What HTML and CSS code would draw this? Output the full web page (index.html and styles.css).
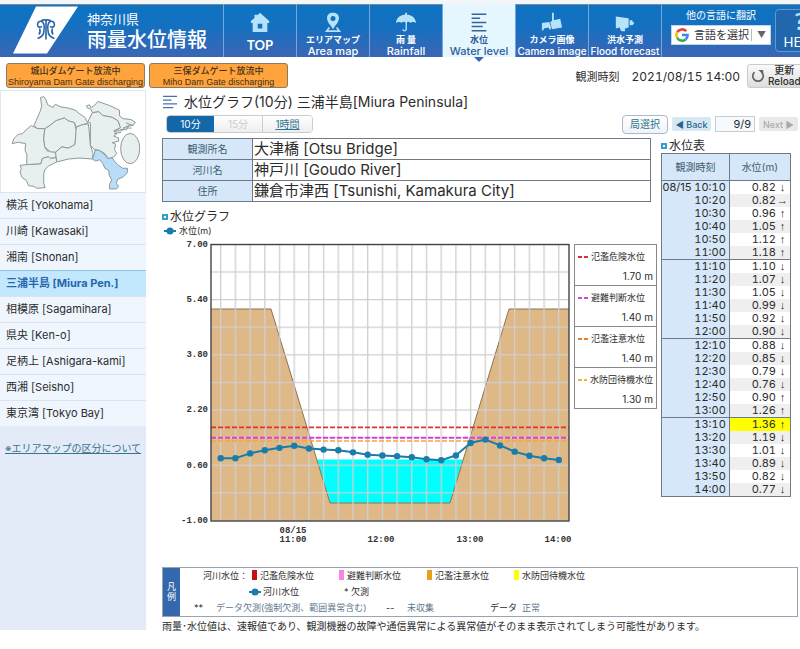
FILE: index.html
```html
<!DOCTYPE html>
<html lang="ja">
<head>
<meta charset="utf-8">
<meta name="viewport" content="width=device-width, initial-scale=1">
<title>神奈川県 雨量水位情報</title>
<link rel="stylesheet" href="styles.css">
</head>
<body>
<header class="header">
  <a class="brand" href="#">
    <svg class="brand-mark" viewBox="0 0 78 52" aria-hidden="true">
      <path d="M36 2H78L47 49H13Z" fill="#fff"/>
      <path d="M42 22Q38 24 37.500 20Q38 16 42 17Q45 19 44 26Q44 32 37.500 34M50 22Q54 24 54.500 20Q54 16 50 17Q47 19 48 26Q48 32 54.500 34M41 17Q42 15 46 15.500Q50 15 51 17M46 16V35M39.500 24Q41 27 39 30M52.500 24Q51 27 53 30" fill="none" stroke="#2b62a8" stroke-width="1.600"/>
    </svg>
    <span class="brand-text"><span class="pref">神奈川県</span><span class="site">雨量水位情報</span></span>
  </a>
  <nav class="nav">
    <a href="#"><svg viewBox="0 0 24 24"><path d="M12 2L22 11V13H20V23H4V13H2V11L6 7.500V4H9V5ZM9.500 14V19H14.500V14Z" fill-rule="evenodd"/></svg><span class="top">TOP</span></a>
    <a href="#"><svg viewBox="0 0 24 24"><path d="M12 2C7 2 5.500 5 5.500 8C5.500 12 9 15 12 20C15 15 18.500 12 18.500 8C18.500 5 17 2 12 2ZM12 5.500A2.700 2.700 0 1 1 12 11A2.700 2.700 0 1 1 12 5.500Z" fill-rule="evenodd"/><path d="M8 18L5 22H19L16 18" fill="none" stroke="#b5e4fa" stroke-width="1.800"/></svg><b>エリアマップ</b><span>Area map</span></a>
    <a href="#"><svg viewBox="0 0 24 24"><path d="M1 13C2 6 7 4 11 4V2H13V4C17 4 22 6 23 13C21 11.500 18 11.500 17 13C15.500 11.500 14 11.500 13 12.500V20C13 23 8 23 8 20H9.500C9.500 21.500 11.500 21.500 11.500 20V12.500C10 11.500 8.500 11.500 7 13C6 11.500 3 11.500 1 13Z"/></svg><b>雨 量</b><span>Rainfall</span></a>
    <a class="current" href="#" aria-current="page"><svg viewBox="0 0 24 24"><path d="M4 3.500H20M4 8H13M4 12.500H20M4 17H16M4 21.500H20" stroke="#38639c" stroke-width="1.600"/></svg><b>水位</b><span>Water level</span></a>
    <a href="#"><svg viewBox="0 0 24 24"><path d="M12 2H14V10L21 8.500L23 18L12 20L10 12L12 11ZM1 13L9 12L11 18L10 21L8 18L3 19V21H1Z"/></svg><b>カメラ画像</b><span class="small">Camera image</span></a>
    <a href="#"><svg viewBox="0 0 24 24"><path d="M2 6L16 8V18L12 19V22H8L6 18L2 19ZM17 10H20V11.500Q24 13 20 15.500H17Z"/></svg><b>洪水予測</b><span class="small">Flood forecast</span></a>
  </nav>
  <div class="translate">
    <label for="lang">他の言語に翻訳</label>
    <div class="lang-box">
      <svg viewBox="0 0 20 20" aria-hidden="true" fill="none" stroke-width="3.200"><path d="M15.300 5.300A7 7 0 0 0 4 6.500" stroke="#e94335"/><path d="M4 6.500A7 7 0 0 0 4 13.500" stroke="#fbbc05"/><path d="M4 13.500A7 7 0 0 0 14.500 15.500" stroke="#34a853"/><path d="M14.500 15.500Q17 13.500 17 10H10" stroke="#4285f4"/></svg>
      <select id="lang"><option>言語を選択</option></select>
      <span class="caret">▼</span>
    </div>
  </div>
  <button class="help" type="button"><b>?</b><span>HELP</span></button>
</header>

<div class="status">
  <a class="alert" href="#"><span>城山ダムゲート放流中</span><span class="en">Shiroyama Dam Gate discharging</span></a>
  <a class="alert" href="#"><span>三保ダムゲート放流中</span><span class="en">Miho Dam Gate discharging</span></a>
  <p class="observed"><span>観測時刻</span><time>2021/08/15 14:00</time></p>
  <button class="reload" type="button"><svg viewBox="0 0 16 16"><path d="M4 3.500A6 6 0 1 0 12 3.500" fill="none" stroke="#666" stroke-width="2"/><path d="M8.500 1H14V6.500Z" fill="#666"/></svg><span>更新<br>Reload</span></button>
</div>

<div class="page">
  <aside class="sidebar">
    <svg class="map" viewBox="0 0 438 306" role="img" aria-label="エリアマップ">
      <g fill="#e7efef" stroke="#8d9699" stroke-width="3" stroke-linejoin="round">
        <path d="M120 20L130 17L136 24L142 42L158 50L165 40L180 48L205 52L225 58L240 70L255 80L264 98L246 103L229 110L223 96L205 91L193 82L168 90L150 104L133 115L110 114L100 105L107 90L120 60L124 45Z"/>
        <path d="M92 105L110 114L133 115L130 145L133 170L140 182L166 186L168 203L150 205L144 200L126 205L121 222L78 224L79 195L73 180L75 160L52 156L34 160L39 145L52 132L65 130L79 116Z"/>
        <path d="M133 115L150 104L168 90L193 82L205 91L223 96L229 120L225 163L205 174L185 170L166 186L150 185L133 170L130 145Z"/>
        <path d="M229 110L246 103L266 100L268 120L272 165L280 190L278 207L240 204L205 207L169 216L166 186L185 170L205 174L225 163Z"/>
        <path d="M58 226L78 224L121 222L126 205L144 200L150 205L168 203L169 216L145 228L134 238L130 252L130 280L134 294L109 296L100 290L84 288L77 272L64 263L58 247L62 236Z"/>
        <path d="M260 45L269 42L274 51L285 43L295 32L330 44L360 58L361 76L371 84L396 87L409 96L399 105L380 108L368 121L348 122L363 112L356 91L338 80L308 74L298 63L278 66L274 56L262 51Z"/>
        <path d="M278 66L298 63L308 74L338 80L356 91L363 112L343 121L353 130L343 137L358 143L357 153L338 157L349 162L345 178L352 190L342 201L328 206L315 190L300 181L284 178L272 165L272 97L264 94Z"/>
        <path d="M363 117L382 118L389 103M371 112L397 113M365 126L344 129M380 97L403 105" fill="none"/>
        <ellipse cx="393" cy="175" rx="29" ry="46"/>
        <path d="M278 207L285 189L286 179L300 181L314 192L325 206L338 203L345 213L355 224L370 235L385 235L384 249L372 261L355 269L351 281L358 290L351 298L330 298L330 284L337 270L329 256L328 242L316 235L310 221L300 209L288 213Z" fill="#b8ddf9"/>
      </g>
    </svg>
    <ul class="areas">
      <li><a href="#">横浜 [Yokohama]</a></li>
      <li><a href="#">川崎 [Kawasaki]</a></li>
      <li><a href="#">湘南 [Shonan]</a></li>
      <li><a class="selected" href="#">三浦半島 [Miura Pen.]</a></li>
      <li><a href="#">相模原 [Sagamihara]</a></li>
      <li><a href="#">県央 [Ken-o]</a></li>
      <li><a href="#">足柄上 [Ashigara-kami]</a></li>
      <li><a href="#">西湘 [Seisho]</a></li>
      <li><a href="#">東京湾 [Tokyo Bay]</a></li>
    </ul>
    <a class="area-note" href="#">※エリアマップの区分について</a>
  </aside>

  <main class="main">
    <h1><svg viewBox="0 0 16 14" aria-hidden="true"><path d="M0 1H15M0 5H9M0 9H15M0 13H11" stroke="#4a70a8" stroke-width="1.500"/></svg>水位グラフ(10分) 三浦半島[Miura Peninsula]</h1>
    <div class="toolbar">
      <div class="tabs"><button class="on" type="button">10分</button><button type="button" disabled>15分</button><button class="link" type="button">1時間</button></div>
      <button class="choose" type="button">局選択</button>
      <button class="pager" type="button">◀ Back</button>
      <input class="page-no" type="text" value="9/9" aria-label="ページ">
      <button class="pager" type="button" disabled>Next ▶</button>
    </div>

    <div class="columns">
      <div class="left">
        <table class="station">
          <tr><th scope="row">観測所名</th><td>大津橋 [Otsu Bridge]</td></tr>
          <tr><th scope="row">河川名</th><td>神戸川 [Goudo River]</td></tr>
          <tr><th scope="row">住所</th><td>鎌倉市津西 [Tsunishi, Kamakura City]</td></tr>
        </table>
        <h2>水位グラフ</h2>
        <p class="series"><svg class="dot" viewBox="0 0 12 8"><path d="M0 4H12" stroke="#1a7cab" stroke-width="2"/><circle cx="6" cy="4" r="3.500" fill="#1a7cab"/></svg>水位(m)</p>
        <div class="chart-row">
          <svg class="chart" viewBox="162 238 412 312" role="img" aria-label="水位グラフ">
            <defs>
              <pattern id="grid" x="220" y="243.800" width="14.700" height="27.600" patternUnits="userSpaceOnUse"><path d="M0.700 0V27.600M0 0.700H14.700" stroke="#cfcfcf" stroke-width="1.300"/></pattern>
            </defs>
            <path d="M211 309H271L330 503H450L509 309H569V521H211Z" fill="#deb887"/>
            <path d="M317 459.500H463L450 503H330Z" fill="#0ff"/>
            <path d="M211 309H271L330 503H450L509 309H569" fill="none" stroke="#8e7350"/>
            <rect x="211" y="244.500" width="358" height="276.500" fill="url(#grid)"/>
            <g fill="none" stroke-dasharray="5 2">
              <path d="M211 441H569" stroke="#edaa3b" stroke-width="1.500"/>
              <path d="M211 437.700H569" stroke="#e53bd6" stroke-width="2"/>
              <path d="M211 427.300H569" stroke="#e33232" stroke-width="1.700"/>
            </g>
            <rect x="211" y="244.500" width="358" height="276.500" fill="none" stroke="#444" stroke-width="1.400"/>
            <g class="level"><polyline id="level-line"/></g>
            <g class="axis" text-anchor="end">
              <text x="208" y="247">7.00</text><text x="208" y="302">5.40</text><text x="208" y="357">3.80</text><text x="208" y="412">2.20</text><text x="208" y="468">0.60</text><text x="208" y="523">-1.00</text>
            </g>
            <g class="axis" text-anchor="middle">
              <text x="293" y="533">08/15</text><text x="293" y="542">11:00</text><text x="381" y="542">12:00</text><text x="470" y="542">13:00</text><text x="558" y="542">14:00</text>
            </g>
          </svg>
          <dl class="limits">
            <div><dt class="danger">氾濫危険水位</dt><dd>1.70 m</dd></div>
            <div><dt class="evacuate">避難判断水位</dt><dd>1.40 m</dd></div>
            <div><dt class="caution">氾濫注意水位</dt><dd>1.40 m</dd></div>
            <div><dt class="standby">水防団待機水位</dt><dd>1.30 m</dd></div>
          </dl>
        </div>
      </div>
      <div class="right">
        <h2>水位表</h2>
        <table class="levels">
          <thead><tr><th scope="col">観測時刻</th><th scope="col">水位(m)</th></tr></thead>
          <tbody>
            <tr><th><span class="date">08/15</span> 10:10</th><td>0.82<i>↓</i></td></tr>
            <tr><th>10:20</th><td>0.82<i>→</i></td></tr>
            <tr><th>10:30</th><td>0.96<i>↑</i></td></tr>
            <tr><th>10:40</th><td>1.05<i>↑</i></td></tr>
            <tr><th>10:50</th><td>1.12<i>↑</i></td></tr>
            <tr><th>11:00</th><td>1.18<i>↑</i></td></tr>
          </tbody>
          <tbody>
            <tr><th>11:10</th><td>1.10<i>↓</i></td></tr>
            <tr><th>11:20</th><td>1.07<i>↓</i></td></tr>
            <tr><th>11:30</th><td>1.05<i>↓</i></td></tr>
            <tr><th>11:40</th><td>0.99<i>↓</i></td></tr>
            <tr><th>11:50</th><td>0.92<i>↓</i></td></tr>
            <tr><th>12:00</th><td>0.90<i>↓</i></td></tr>
          </tbody>
          <tbody>
            <tr><th>12:10</th><td>0.88<i>↓</i></td></tr>
            <tr><th>12:20</th><td>0.85<i>↓</i></td></tr>
            <tr><th>12:30</th><td>0.79<i>↓</i></td></tr>
            <tr><th>12:40</th><td>0.76<i>↓</i></td></tr>
            <tr><th>12:50</th><td>0.90<i>↑</i></td></tr>
            <tr><th>13:00</th><td>1.26<i>↑</i></td></tr>
          </tbody>
          <tbody>
            <tr><th>13:10</th><td class="over">1.36<i>↑</i></td></tr>
            <tr><th>13:20</th><td>1.19<i>↓</i></td></tr>
            <tr><th>13:30</th><td>1.01<i>↓</i></td></tr>
            <tr><th>13:40</th><td>0.89<i>↓</i></td></tr>
            <tr><th>13:50</th><td>0.82<i>↓</i></td></tr>
            <tr><th>14:00</th><td>0.77<i>↓</i></td></tr>
          </tbody>
        </table>
      </div>
    </div>

    <section class="legend">
      <h3>凡<br>例</h3>
      <div class="legend-body">
        <div class="levels-key"><span>河川水位：</span><span class="key red">氾濫危険水位</span><span class="key pink">避難判断水位</span><span class="key orange">氾濫注意水位</span><span class="key yellow">水防団待機水位</span></div>
        <div class="marks-key"><span><svg class="dot" viewBox="0 0 12 8"><path d="M0 4H12" stroke="#1a7cab" stroke-width="2"/><circle cx="6" cy="4" r="3.500" fill="#1a7cab"/></svg>河川水位</span><span>* 欠測</span></div>
        <div class="data-key"><span>**</span><em>データ欠測(強制欠測、範囲異常含む)</em><span>--</span><em>未収集</em><span>データ</span><em>正常</em></div>
      </div>
    </section>
    <p class="notice">雨量･水位値は、速報値であり、観測機器の故障や通信異常による異常値がそのまま表示されてしまう可能性があります。</p>
  </main>
</div>
<script src="chart.js"></script>
</body>
</html>
```
FILE: styles.css
```css
*, *::before, *::after { box-sizing: border-box; }
body {
  margin: 0;
  overflow-x: hidden;
  background: #fff;
  color: #2c2c2c;
  font: 11px/16px Inter, "Noto Sans CJK JP", sans-serif;
}
h1, h2, h3, p, ul, dl, dd { margin: 0; padding: 0; font-weight: 400; }
a { color: inherit; text-decoration: none; }
button, input, select { font: inherit; color: inherit; margin: 0; padding: 0; }
svg { flex: none; }
table { border-collapse: collapse; }
th { font-weight: 400; }

/* Header */
.header {
  display: flex;
  height: 57px;
  border-top: 4px solid #f3f6f8;
  background: linear-gradient(#7b8790 1px, #0d73c2 1px, #1470c0 40%, #3b66b5);
  color: #fff;
}
.brand { display: flex; flex: 0 0 223px; gap: 9px; }
.brand-mark { width: 78px; height: 53px; }
.brand-text { display: flex; flex-direction: column; padding-top: 6px; }
.pref { font-size: 13px; line-height: 18px; }
.site { font-size: 20px; line-height: 24px; font-weight: 500; }
.nav { display: grid; grid-template-columns: repeat(6, 73px); flex: none; border-right: 1px solid #76a7da; }
.nav a {
  position: relative;
  display: flex;
  flex-direction: column;
  align-items: center;
  padding-top: 7px;
  border-left: 1px solid #76a7da;
  font-size: 11px;
  line-height: 11px;
  font-weight: 500;
  white-space: nowrap;
}
.nav svg { width: 22px; height: 22px; fill: #b5e4fa; }
.nav b { font-size: 9px; line-height: 13px; }
.nav .top { font: 700 13px/24px Lato, sans-serif; }
.nav .small { font-size: 10px; }
.nav .current { background: #e6f6ff; color: #2d5f98; }
.nav .current::after {
  content: "";
  position: absolute;
  top: 100%;
  left: 31px;
  border: 5px solid transparent;
  border-top-color: #3b66b5;
  border-bottom: 0;
}
.translate { flex: 0 0 113px; padding: 4px 0 0 9px; }
.translate label { display: block; padding-left: 15px; font-size: 10px; line-height: 15px; }
.lang-box {
  display: flex;
  align-items: center;
  width: 100px;
  height: 20px;
  margin-top: 2px;
  padding: 0 4px 0 2px;
  background: #fff;
  border: 1px solid #c5d2e4;
  color: #333;
}
.lang-box svg { width: 16px; height: 16px; }
.lang-box select { appearance: none; border: 0; background: none; flex: 1; min-width: 0; padding-left: 4px; font-size: 11px; }
.caret { border-left: 1px solid #bbb; padding-left: 5px; font-size: 9px; line-height: 12px; color: #666; }
.help {
  flex: 0 0 49px;
  height: 43px;
  margin-top: 5px;
  border: 1px solid #6399cf;
  border-radius: 4px;
  background: #2067ae;
  display: flex;
  flex-direction: column;
  align-items: center;
}
.help b { font: 700 22px/24px Lato, sans-serif; color: #b5e4fa; }
.help span { font: 13px/16px Lato, sans-serif; }

/* Status bar */
.status { display: flex; align-items: flex-start; gap: 4px; padding: 6px 0 2px 6px; }
.alert {
  flex: 0 0 139px;
  min-width: 0;
  height: 25px;
  border: 1px solid #8b7a65;
  border-radius: 3px;
  background: #ffa33c;
  color: #443018;
  text-align: center;
  white-space: nowrap;
}
.alert span { display: block; font-size: 9px; line-height: 13px; font-weight: 500; }
.alert .en { font: 9px/10px "Liberation Sans", sans-serif; }
.observed { display: flex; gap: 12px; margin-left: auto; padding: 6px 3px 0 0; white-space: nowrap; }
.observed time { font-size: 12px; font-variant-numeric: tabular-nums; }
.reload {
  display: flex;
  align-items: center;
  flex: 0 0 60px;
  height: 24px;
  margin: 1px -7px 0 0;
  padding-left: 3px;
  gap: 3px;
  border: 1px solid #ccc;
  border-radius: 3px;
  background: linear-gradient(#fafafa, #ddd);
  font-size: 10px;
  line-height: 11px;
  font-weight: 500;
}
.reload svg { width: 14px; height: 14px; }

/* Sidebar */
.page { display: grid; grid-template-columns: 146px minmax(0, 1fr); gap: 16px; }
.sidebar { margin-bottom: 9px; background: #e3ebf8; }
.map { display: block; width: 100%; background: #fff; border: 1px solid #e2e8f0; border-bottom: 0; }
.areas { list-style: none; }
.areas a { display: block; height: 26px; padding-left: 6px; line-height: 25px; background: #f0f6fe; border-top: 1px solid #dde4ef; }
.areas .selected { background: #c3e7fc; border-top-color: #8fc2e3; color: #2866ae; font-weight: 700; }
.area-note { display: block; padding: 14px 0 0 5px; font-size: 10px; color: #3a738c; text-decoration: underline; white-space: nowrap; }

/* Main */
.main { padding-right: 2px; }
h1 { display: flex; align-items: center; gap: 6px; height: 24px; padding-left: 1px; font-size: 14px; white-space: nowrap; }
h1 svg { width: 15px; height: 14px; }
.toolbar { display: flex; align-items: center; gap: 4px; height: 20px; padding-left: 4px; }
.tabs { display: grid; grid-template-columns: 47px 49px 49px; height: 18px; margin-right: auto; border: 1px solid #ccc; border-radius: 4px; overflow: hidden; }
.tabs button { border: 0; background: linear-gradient(#fff, #eee); font-size: 10px; line-height: 14px; }
.tabs button:disabled { color: #ccc; border-right: 1px solid #ccc; }
.tabs .on { background: #1268a8; color: #fff; }
.tabs .link { color: #2d7590; text-decoration: underline; }
.choose { width: 46px; height: 19px; border: 1px solid #aab8cc; border-radius: 4px; background: linear-gradient(#fff, #f0f3f8); color: #2d7590; font-size: 10px; line-height: 16px; }
.pager { width: 39px; height: 14px; border: 0; border-radius: 2px; background: #d6e8f3; color: #28648b; font-size: 9px; line-height: 13px; font-weight: 500; white-space: nowrap; }
.pager:disabled { background: #e9e9e9; color: #aaa; }
.page-no { width: 40px; height: 16px; border: 1px solid #ccc; background: #f5faff; text-align: right; padding-right: 3px; }
.columns { display: grid; grid-template-columns: minmax(0, 1fr) 130px; gap: 4px; padding: 4px 7px 0 0; }
.station { width: calc(100% - 6px); margin-bottom: 5px; }
.station th { width: 90px; background: #d5e7f8; color: #3c5a72; font-size: 10px; }
.station td { padding: 0 1px; font-size: 15px; line-height: 20px; }
.station th, .station td { height: 21px; border: 1px solid #6e7a85; }
.station th { padding: 0; }
h2 { display: flex; align-items: center; gap: 2px; height: 19px; font-size: 12px; }
h2::before { content: ""; width: 6px; height: 6px; border: 2px solid #33a0cb; }
.series { display: flex; align-items: center; gap: 3px; height: 9px; padding-left: 2px; font-size: 9px; }
.dot { width: 12px; height: 8px; }
.chart-row { display: grid; grid-template-columns: minmax(0, 1fr) 83px; align-items: start; padding-top: 3px; }
.chart { display: block; width: 100%; }
.level { fill: #1a7cab; }
.level polyline { fill: none; stroke: #1a7cab; stroke-width: 2; }
.axis { font: bold 9px "Liberation Mono", monospace; fill: #333; }
.limits { margin-top: 6px; border: 1px solid #888; border-bottom: 0; font-size: 9px; }
.limits div { height: 41px; padding: 4px 3px 0; border-bottom: 1px solid #888; }
.limits dt { display: flex; align-items: center; gap: 3px; white-space: nowrap; }
.limits dt::before { content: ""; width: 10px; height: 2px; background: repeating-linear-gradient(90deg, currentColor 0 4px, transparent 4px 6px); }
.limits .danger::before { color: #dd2d37; }
.limits .evacuate::before { color: #db45cd; }
.limits .caution::before { color: #ee7c2b; }
.limits .standby::before { color: #eeb53e; }
.limits dd { padding-top: 4px; text-align: right; font-size: 10px; line-height: 14px; }

/* Level table */
.right h2 { height: 15px; }
.levels { width: 100%; border: 1px solid #6e7a85; font-variant-numeric: tabular-nums; }
.levels thead th { height: 27px; color: #3c5a72; font-size: 10px; text-align: center; padding: 0; }
.levels th { width: 68px; padding: 0 3px 0 0; background: #d5e7f8; border-right: 1px solid #6e7a85; text-align: right; white-space: nowrap; }
.levels .date { font-variant-numeric: normal; }
.levels td { height: 13px; padding: 0 1px 0 0; text-align: right; line-height: 13px; }
.levels tbody th { line-height: 13px; }
.levels tbody { border-top: 1px solid #6e7a85; }
.levels tbody tr:nth-child(even) td { background: #efefef; }
.levels td.over { background: #ff0; }
.levels i { display: inline-block; width: 13px; font: 11px/12px "Liberation Sans", sans-serif; text-align: center; }

/* Legend */
.legend { display: flex; margin-top: 17px; border: 1px solid #9aa3b0; font-size: 9px; }
.legend h3 { display: grid; place-items: center; width: 17px; background: #3567ae; color: #fff; font-size: 9px; line-height: 10px; }
.legend-body { flex: 1; line-height: 16px; white-space: nowrap; }
.levels-key { display: grid; grid-template-columns: 49px 87px 88px 87px 1fr; padding-left: 23px; }
.key::before { content: ""; display: inline-block; width: 5px; height: 10px; margin-right: 3px; vertical-align: -1px; background: #c11218; }
.pink::before { background: #f985df; }
.orange::before { background: #e5a01d; }
.yellow::before { background: #ff0; }
.marks-key { display: grid; grid-template-columns: 95px 1fr; padding-left: 69px; }
.marks-key .dot { margin-right: 2px; vertical-align: -1px; }
.data-key { display: grid; grid-template-columns: 22px 170px 21px 83px 32px 1fr; padding-left: 14px; }
.data-key em { color: #5f7890; font-style: normal; }
.notice { padding: 2px 0 6px; font-size: 10px; line-height: 14px; white-space: nowrap; }
```
FILE: chart.js
```js
const levels = [0.82, 0.82, 0.96, 1.05, 1.12, 1.18, 1.10, 1.07, 1.05, 0.99, 0.92, 0.90,
  0.88, 0.85, 0.79, 0.76, 0.90, 1.26, 1.36, 1.19, 1.01, 0.89, 0.82, 0.77];
const line = document.getElementById("level-line");
const points = levels.map((v, i) => [220.7 + i * 14.7, 521 - (v + 1) * 34.5]);
line.setAttribute("points", points.map(p => p.join(",")).join(" "));
for (const [x, y] of points) {
  const dot = document.createElementNS("http://www.w3.org/2000/svg", "circle");
  dot.setAttribute("cx", x);
  dot.setAttribute("cy", y);
  dot.setAttribute("r", 3.2);
  line.parentNode.appendChild(dot);
}
```
